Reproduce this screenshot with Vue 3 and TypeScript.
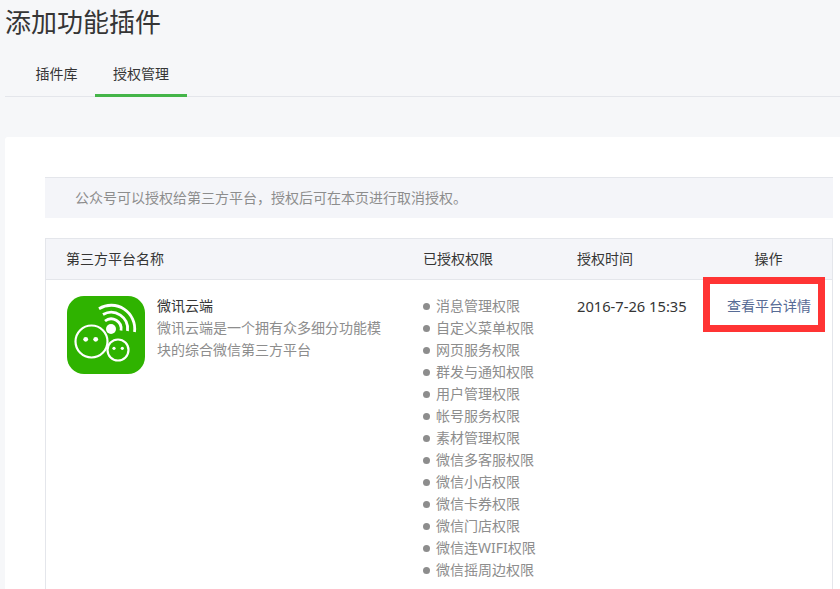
<script setup lang="ts">
const perms: string[] = [
  '消息管理权限', '自定义菜单权限', '网页服务权限', '群发与通知权限', '用户管理权限',
  '帐号服务权限', '素材管理权限', '微信多客服权限', '微信小店权限', '微信卡券权限',
  '微信门店权限', '微信连WIFI权限', '微信摇周边权限',
]
</script>

<template>
  <div class="page">
    <h1 class="title">添加功能插件</h1>
    <nav class="tabs">
      <a class="tab">插件库</a>
      <a class="tab active">授权管理</a>
    </nav>
    <section class="card">
      <p class="notice">公众号可以授权给第三方平台，授权后可在本页进行取消授权。</p>
      <div class="table">
        <div class="row head">
          <div class="c1">第三方平台名称</div>
          <div class="c2">已授权权限</div>
          <div class="c3">授权时间</div>
          <div class="c4">操作</div>
        </div>
        <div class="row body">
          <div class="c1 app">
            <svg class="logo" viewBox="0 0 78 78" width="78" height="78">
              <rect width="78" height="78" rx="17" fill="#2fb300" />
              <g fill="none" stroke="#fff">
                <circle cx="24.5" cy="45.5" r="16" stroke-width="2.2" />
                <circle cx="51" cy="54" r="10.5" stroke-width="2.2" />
                <path d="M38 25 A 10 10 0 0 1 54 34.5" stroke-width="2.8" />
                <path d="M36 18.5 A 16.5 16.5 0 0 1 60.5 35" stroke-width="2.8" />
                <path d="M32 12.7 A 23.5 23.5 0 0 1 67.5 36" stroke-width="2.8" />
              </g>
              <g fill="#fff">
                <circle cx="44" cy="33" r="5" />
                <circle cx="18.7" cy="43.3" r="2.4" />
                <circle cx="28.7" cy="43.3" r="2.4" />
                <circle cx="47" cy="52.3" r="1.6" />
                <circle cx="55.3" cy="52.3" r="1.6" />
              </g>
            </svg>
            <div class="info">
              <div class="name">微讯云端</div>
              <div class="desc">微讯云端是一个拥有众多细分功能模块的综合微信第三方平台</div>
            </div>
          </div>
          <ul class="c2 perms">
            <li v-for="p in perms" :key="p" class="perm">{{ p }}</li>
          </ul>
          <div class="c3 time">2016-7-26 15:35</div>
          <div class="c4 action">
            <a class="link">查看平台详情</a>
          </div>
        </div>
        <div class="mark"></div>
      </div>
    </section>
  </div>
</template>

<style>
html, body { margin: 0; padding: 0; background: #f6f7f9; overflow: hidden; }
</style>

<style scoped>
.page {
  width: 840px;
  height: 589px;
  overflow: hidden;
  padding-left: 5px;
  box-sizing: border-box;
  font-family: "Noto Sans", "Noto Sans CJK SC", sans-serif;
  color: #353535;
  font-size: 14px;
}
.title {
  margin: 0 0 2px;
  font-size: 26px;
  font-weight: 400;
  line-height: 44px;
  color: #353535;
}
.tabs {
  display: flex;
  height: 51px;
  box-sizing: border-box;
  border-bottom: 1px solid #e4e6eb;
}
.tab {
  box-sizing: border-box;
  width: 90px;
  height: 51px;
  padding-right: 13px;
  padding-left: 26px;
  text-align: center;
  line-height: 55px;
  color: #353535;
}
.tab.active {
  width: 92px;
  padding: 0;
  border-bottom: 3px solid #44b549;
}
.card {
  margin-top: 40px;
  width: 900px;
  height: 500px;
  box-sizing: border-box;
  padding: 40px 0 0 40px;
  background: #fff;
  border-radius: 3px 0 0 0;
}
.notice {
  margin: 0;
  width: 788px;
  height: 41px;
  box-sizing: border-box;
  padding-left: 30px;
  line-height: 39px;
  background: #f4f5f9;
  border-top: 1px solid #e4e6eb;
  color: #8d8d8d;
}
.table {
  position: relative;
  margin-top: 20px;
  width: 788px;
  box-sizing: border-box;
  border: 1px solid #e4e6eb;
  border-bottom: 0;
}
.row {
  display: grid;
  grid-template-columns: 356px 154px 149px 127px;
}
.head {
  height: 41px;
  line-height: 40px;
  background: #f4f5f9;
  border-bottom: 1px solid #e4e6eb;
  box-sizing: border-box;
}
.c1 { padding-left: 20px; }
.c2 { padding-left: 21px; }
.c3 { padding-left: 21px; }
.c4 { text-align: center; }
.body { height: 320px; }
.app {
  display: flex;
  gap: 12px;
  padding-top: 16px;
  padding-left: 21px;
}
.logo { flex: none; }
.info {
  width: 226px;
  line-height: 22px;
  margin-top: -1px;
}
.name { color: #353535; font-size: 14px; }
.desc { color: #8d8d8d; font-size: 14px; }
.perms {
  list-style: none;
  margin: 0;
  padding-top: 15px;
  line-height: 22px;
  color: #8d8d8d;
}
.perm {
  display: flex;
  align-items: center;
  gap: 6px;
}
.perm::before {
  content: "";
  width: 7px;
  height: 7px;
  border-radius: 50%;
  background: #8d8d8d;
}
.time { padding-top: 15px; line-height: 22px; font-size: 14.7px; }
.action { padding-top: 15px; line-height: 22px; text-align: right; padding-right: 21px; }
.link { color: #576b95; font-size: 14px; }
.mark {
  position: absolute;
  left: 657px;
  top: 38px;
  width: 122px;
  height: 55px;
  box-sizing: border-box;
  border: 7px solid #ff3434;
}
</style>
